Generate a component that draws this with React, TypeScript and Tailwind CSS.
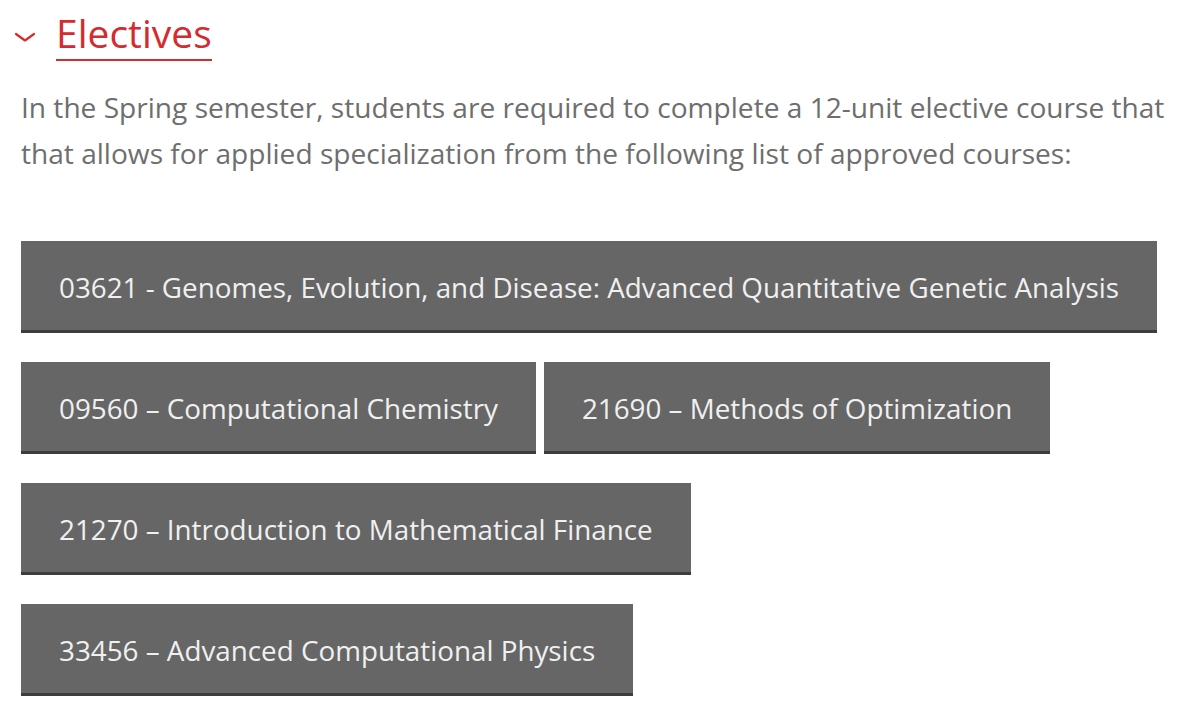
const courses = [
  "03621 - Genomes, Evolution, and Disease: Advanced Quantitative Genetic Analysis",
  "09560 – Computational Chemistry",
  "21690 – Methods of Optimization",
  "21270 – Introduction to Mathematical Finance",
  "33456 – Advanced Computational Physics",
];

export default function App() {
  return (
    <div className="min-h-screen bg-white" style={{ fontFamily: "'Open Sans', sans-serif" }}>
      <div className="pl-[21px] pr-[20px] pt-[10px]">
        {/* Section header */}
        <div className="flex items-center">
          <svg width="24" height="14" viewBox="0 0 24 14" className="ml-[-8px] mr-[19px] mt-[2px]">
            <path d="M3 4 L12 10.5 L21 4" fill="none" stroke="#d52b2f" strokeWidth="2.2" strokeLinecap="round" strokeLinejoin="round" />
          </svg>
          <h2 className="text-[39px] leading-[46px] text-[#d52b2f] border-b-2 border-[#d52b2f] pb-[3px]">
            Electives
          </h2>
        </div>

        <p className="mt-[23px] text-[28.1px] leading-[46px] text-[#6e6e6e]">
          In the Spring semester, students are required to complete a 12-unit elective course that
          that allows for applied specialization from the following list of approved courses:
        </p>

        {/* Course buttons */}
        <div className="mt-[65px] flex flex-wrap gap-x-2 gap-y-[29px]">
          {courses.map((c) => (
            <div
              key={c}
              className="bg-[#666666] border-b-[3px] border-[#3d3d3d] text-[#f0f0f0] text-[27.8px] leading-[89px] pt-[2px] h-[92px] px-[38px] whitespace-nowrap"
            >
              {c}
            </div>
          ))}
        </div>
      </div>
    </div>
  );
}
